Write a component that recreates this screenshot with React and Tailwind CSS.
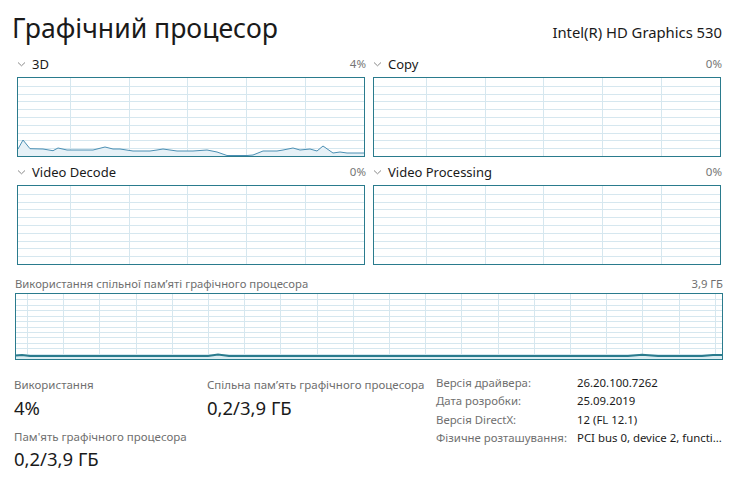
import React from "react";

const BORDER = "#2a7b8d";
const GRID = "#d6e7ef";

// horizontal + vertical grid lines for a chart box
const Grid = ({ w, h, rows, step, offset }) => {
  const hs = [];
  for (let i = 1; i < rows; i++) hs.push((h / rows) * i);
  const vs = [];
  for (let x = offset; x < w; x += step) vs.push(x);
  return (
    <g stroke={GRID} strokeWidth="1" shapeRendering="crispEdges">
      {hs.map((y) => (
        <line key={"h" + y} x1="0" x2={w} y1={Math.round(y) + 0.5} y2={Math.round(y) + 0.5} />
      ))}
      {vs.map((x) => (
        <line key={"v" + x} y1="0" y2={h} x1={Math.round(x) + 0.5} x2={Math.round(x) + 0.5} />
      ))}
    </g>
  );
};

const Chart = ({ w, h, rows, step, offset, points, lineColor, fillColor, strokeWidth = 1 }) => (
  <div className="border" style={{ borderColor: BORDER }}>
    <svg width={w} height={h} className="block">
      <Grid w={w} h={h} rows={rows} step={step} offset={offset} />
      {points && (
        <>
          <polygon
            points={`0,${h} ${points.map((p) => p.join(",")).join(" ")} ${w},${h}`}
            fill={fillColor}
            stroke="none"
          />
          <polyline
            points={points.map((p) => p.join(",")).join(" ")}
            fill="none"
            stroke={lineColor}
            strokeWidth={strokeWidth}
          />
        </>
      )}
    </svg>
  </div>
);

const Chevron = () => (
  <svg width="9" height="6" viewBox="0 0 9 6" className="mr-[6px]">
    <path d="M1 1.5 L4.5 4.8 L8 1.5" fill="none" stroke="#8a8a8a" strokeWidth="1" />
  </svg>
);

const raw3d = [
  [17, 149], [23, 140], [30, 148.7], [43, 149], [53, 150.7], [58, 148], [67, 150], [93, 150],
  [105, 147], [113, 149], [120, 149], [133, 151], [150, 151], [157, 150], [163, 149], [177, 151],
  [193, 151], [207, 150], [217, 152], [227, 155.5], [247, 155.5], [253, 155], [263, 151], [277, 151],
  [283, 150], [293, 148], [300, 150], [310, 149], [317, 151], [323, 146], [333, 153], [340, 152],
  [347, 153], [364, 153],
];
const points3d = raw3d.map(([x, y]) => [Math.max(0, x - 18), y - 78]);

const memPoints = [
  [0, 61.5], [6, 61], [14, 62], [192, 62], [202, 60.5], [213, 62], [612, 62], [626, 60.8],
  [642, 62], [686, 62], [697, 61], [706, 61],
];

const Panel = ({ title, pct, points }) => (
  <div className="flex flex-col">
    <div className="flex items-center justify-between h-[23px] leading-[20px] pb-[3px]">
      <div className="flex items-center text-[13px] text-[#1a1a1a]">
        <Chevron />
        {title}
      </div>
      <div className="text-[11.5px] text-[#757575] mr-[-1px]">{pct}</div>
    </div>
    <Chart
      w={346}
      h={78}
      rows={10}
      step={58.7}
      offset={52}
      points={points}
      lineColor="#4b8fb3"
      fillColor="#e6f1f7"
    />
  </div>
);

export default function App() {
  return (
    <div
      className="w-[737px] h-[488px] bg-white overflow-hidden"
      style={{ fontFamily: '"Noto Sans", "Open Sans", sans-serif' }}
    >
      <div className="flex items-baseline justify-between h-[54px] pt-[10px] pl-[12px] pr-[15px]">
        <h1 className="text-[26.6px] leading-[36px] text-[#1a1a1a]">Графічний процесор</h1>
        <div className="text-[14.8px] text-[#1a1a1a]">Intel(R) HD Graphics 530</div>
      </div>

      <div className="grid grid-cols-[348px_348px] gap-x-[8px] gap-y-[5px] pl-[17px]">
        <Panel title="3D" pct="4%" points={points3d} />
        <Panel title="Copy" pct="0%" />
        <Panel title="Video Decode" pct="0%" />
        <Panel title="Video Processing" pct="0%" />
      </div>

      <div className="pl-[15px] w-[723px]">
        <div className="flex justify-between h-[28px] pt-[10px] leading-[18px] text-[11.3px] text-[#6f6f6f]">
          <span>Використання спільної пам’яті графічного процесора</span>
          <span>3,9 ГБ</span>
        </div>
        <Chart
          w={706}
          h={65}
          rows={12}
          step={36.2}
          offset={11}
          points={memPoints}
          lineColor={BORDER}
          fillColor="#dcedf2"
          strokeWidth={2}
        />
      </div>

      <div className="flex items-start pl-[14px]">
        <div className="w-[193px] pt-[16px]">
          <div className="text-[11.5px] leading-[18px] text-[#6f6f6f]">Використання</div>
          <div className="mt-[2px] text-[18.5px] leading-[24px] text-[#1a1a1a]">4%</div>
          <div className="mt-[8px] text-[11.5px] leading-[18px] text-[#6f6f6f]">Пам'ять графічного процесора</div>
          <div className="mt-[1px] text-[18.5px] leading-[24px] text-[#1a1a1a]">0,2/3,9 ГБ</div>
        </div>
        <div className="w-[229px] pt-[16px]">
          <div className="text-[11.5px] leading-[18px] text-[#6f6f6f]">Спільна пам’ять графічного процесора</div>
          <div className="mt-[2px] text-[18.5px] leading-[24px] text-[#1a1a1a]">0,2/3,9 ГБ</div>
        </div>
        <div className="grid grid-cols-[141px_auto] pt-[14px] text-[11.4px] leading-[18.4px]">
          <span className="text-[#6f6f6f]">Версія драйвера:</span>
          <span className="text-[#1a1a1a]">26.20.100.7262</span>
          <span className="text-[#6f6f6f]">Дата розробки:</span>
          <span className="text-[#1a1a1a]">25.09.2019</span>
          <span className="text-[#6f6f6f]">Версія DirectX:</span>
          <span className="text-[#1a1a1a]">12 (FL 12.1)</span>
          <span className="text-[#6f6f6f]">Фізичне розташування:</span>
          <span className="text-[#1a1a1a]">PCI bus 0, device 2, functi...</span>
        </div>
      </div>
    </div>
  );
}
